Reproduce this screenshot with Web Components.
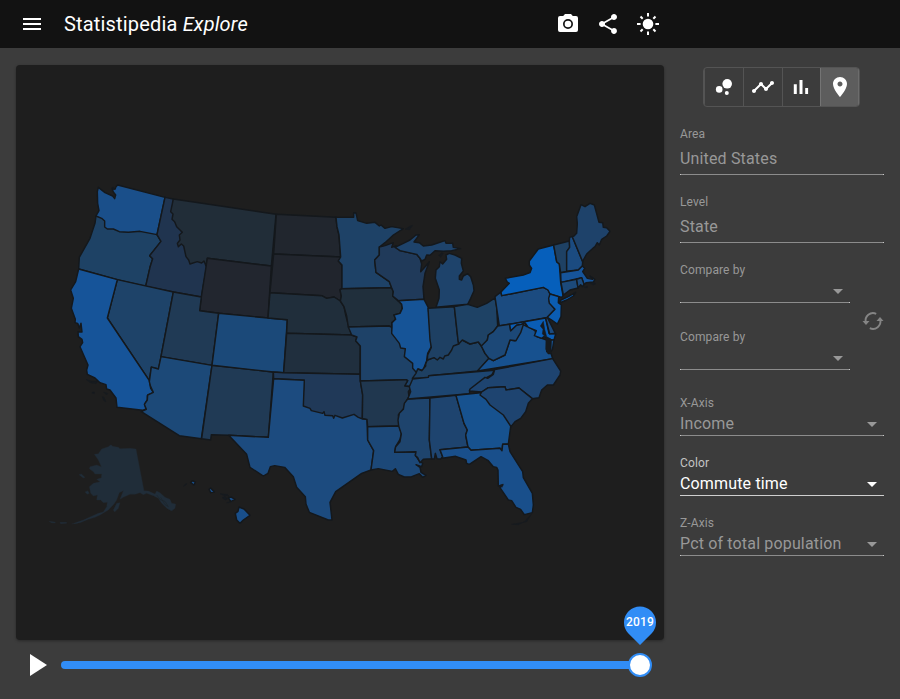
<!DOCTYPE html>
<html lang="en">
<head>
<meta charset="utf-8">
<title>Statistipedia Explore</title>
<style>
html,body{margin:0;height:100%}
body{background:#3c3c3c;color:#fff;font-family:Roboto,"Liberation Sans",sans-serif;overflow:hidden}
</style>
</head>
<body>
<sp-app></sp-app>
<script>
const define=(name,html,init)=>customElements.define(name,class extends HTMLElement{
  connectedCallback(){
    if(this.shadowRoot)return;
    const r=this.attachShadow({mode:'open'});
    const t=document.createElement('template');
    t.innerHTML=typeof html==='function'?html(this):html;
    r.append(t.content.cloneNode(true));
    if(init)init(this,r);
  }
});

const icons={
  menu:'<path d="M3 18h18v-2H3v2zm0-5h18v-2H3v2zm0-7v2h18V6H3z"/>',
  camera:'<path fill-rule="evenodd" d="M9 2 7.200 4H4a2 2 0 0 0-2 2v12a2 2 0 0 0 2 2h16a2 2 0 0 0 2-2V6a2 2 0 0 0-2-2h-3.200L15 2zM12 7a5 5 0 1 1 0 10 5 5 0 0 1 0-10z"/><circle cx="12" cy="12" r="3.300"/>',
  share:'<path d="M18 16.080c-.76 0-1.440.3-1.960.77L8.910 12.700c.05-.23.09-.46.09-.7s-.04-.47-.09-.7l7.050-4.110c.54.5 1.250.81 2.040.81 1.660 0 3-1.340 3-3s-1.340-3-3-3-3 1.340-3 3c0 .24.04.47.09.7L8.040 9.810C7.500 9.310 6.790 9 6 9c-1.660 0-3 1.340-3 3s1.340 3 3 3c.79 0 1.500-.31 2.040-.81l7.120 4.160c-.05.21-.08.43-.08.65 0 1.610 1.310 2.920 2.920 2.920s2.920-1.310 2.920-2.920-1.310-2.920-2.920-2.920z"/>',
  sun:'<circle cx="12" cy="12" r="5.300"/><path fill="none" stroke="currentColor" stroke-width="2" d="M12 1v3.600M12 19.400V23M1 12h3.600M19.400 12H23M4.500 4.500l2.200 2.200M17.300 17.300l2.200 2.200M19.500 4.500l-2.200 2.200M6.700 17.300l-2.200 2.200"/>',
  bubble:'<circle cx="7.200" cy="14.400" r="3.300"/><circle cx="14.800" cy="18" r="2"/><circle cx="15.200" cy="8.800" r="4.800"/>',
  line:'<path d="M23 8c0 1.100-.9 2-2 2-.18 0-.35-.02-.51-.07l-3.560 3.550c.05.16.07.34.07.52 0 1.100-.9 2-2 2s-2-.9-2-2c0-.18.02-.36.07-.52l-2.550-2.550c-.16.05-.34.07-.52.07s-.36-.02-.52-.07l-4.550 4.560c.05.16.07.33.07.51 0 1.100-.9 2-2 2s-2-.9-2-2 .9-2 2-2c.18 0 .35.02.51.07l4.560-4.550C8.020 9.360 8 9.180 8 9c0-1.100.9-2 2-2s2 .9 2 2c0 .18-.02.36-.07.52l2.550 2.550c.16-.05.34-.07.52-.07s.36.02.52.07l3.550-3.560C19.020 8.350 19 8.180 19 8c0-1.100.9-2 2-2s2 .9 2 2z"/>',
  bars:'<path d="M4.800 9.200h3V19h-3zM10.500 5h3v14h-3zM16.200 13h2.900v6h-2.900z"/>',
  pin:'<path d="M12 2C8.130 2 5 5.130 5 9c0 5.250 7 13 7 13s7-7.750 7-13c0-3.870-3.130-7-7-7zm0 9.500c-1.380 0-2.500-1.120-2.500-2.500s1.120-2.500 2.500-2.500 2.500 1.120 2.500 2.500-1.120 2.500-2.500 2.500z"/>',
  swap:'<path fill="none" stroke="currentColor" stroke-width="1.900" d="M15.200 4.800A7.500 7.500 0 0 0 4.800 13.400M8.800 19.200A7.500 7.500 0 0 0 19.200 10.600"/><path d="M1.500 12h7l-3.500 4zM15.500 12h7L19 8z"/>'
};
define('sp-icon',el=>`<style>:host{display:block;width:24px;height:24px;flex:none}svg{display:block}</style>
<svg width="24" height="24" viewBox="0 0 24 24" fill="currentColor">${icons[el.getAttribute('name')]}</svg>`);

define('sp-header',`<style>
:host{display:flex;align-items:center;height:48px;background:#121212;padding:0 20px}
h1{margin:0 0 0 20px;font-size:20px;font-weight:400;line-height:24px;letter-spacing:.17px;width:492px}
nav{display:flex;gap:16px}
</style><sp-icon name="menu"></sp-icon><h1><slot></slot></h1>
<nav><sp-icon name="camera"></sp-icon><sp-icon name="share"></sp-icon><sp-icon name="sun"></sp-icon></nav>`);

define('sp-toggle-group',`<style>
:host{display:flex;box-sizing:border-box;width:157px;height:40px;border:1px solid #545454;border-radius:4px;overflow:hidden}
div{flex:1;display:grid;place-items:center;border-left:1px solid #545454}
div:first-child{border-left:0}
.on{background:#5d5d5d;border-color:#747474;box-shadow:inset -1px 0 #6c6c6c}
</style><div><sp-icon name="bubble"></sp-icon></div><div><sp-icon name="line"></sp-icon></div><div><sp-icon name="bars"></sp-icon></div><div class="on"><sp-icon name="pin"></sp-icon></div>`);

define('sp-field',el=>`<style>
:host{display:flex;flex-direction:column;box-sizing:border-box;height:41px;color:#989898;
 background:linear-gradient(90deg,#c8c8c8 1px,#8c8c8c 1px calc(100% - 1px),#c8c8c8 calc(100% - 1px)) bottom/100% 1px no-repeat}
:host([kind=text]){height:49px}
:host([active]){color:#fff;background:linear-gradient(#cfcfcf,#cfcfcf) bottom/100% 1px no-repeat}
label{font-size:12px;line-height:16px;letter-spacing:.12px;height:16px}
:host([active]) label{color:#c4c4c4}
.v{display:flex;align-items:center;justify-content:space-between;font-size:16px;line-height:24px;height:25px;letter-spacing:.16px;padding-right:7px}
:host([kind=text]) .v{padding-top:4px}
i{width:0;height:0;border:5px solid transparent;border-top-color:currentColor;border-bottom:0;margin-top:2px}
:host([kind=text]) i{display:none}
</style><label>${el.getAttribute('label')}</label><div class="v"><span><slot></slot></span><i></i></div>`);

define('sp-sidebar',`<style>
:host{display:flex;flex-direction:column;width:204px;padding:19px 16px 0}
sp-toggle-group{margin:0 0 19px 23px}
sp-field{margin-bottom:19px}
.pair{display:flex;align-items:center;justify-content:space-between;margin-bottom:25px}
.stack{width:170px;display:flex;flex-direction:column;gap:26px}
.stack sp-field{margin:0}
.pair sp-icon{color:#858585;margin:9px -1px 0 0}
</style>
<sp-toggle-group></sp-toggle-group>
<sp-field kind="text" label="Area">United States</sp-field>
<sp-field kind="text" label="Level">State</sp-field>
<div class="pair"><div class="stack"><sp-field label="Compare by"></sp-field><sp-field label="Compare by"></sp-field></div><sp-icon name="swap"></sp-icon></div>
<sp-field label="X-Axis">Income</sp-field>
<sp-field active label="Color">Commute time</sp-field>
<sp-field label="Z-Axis">Pct of total population</sp-field>`);

/* Outlines are digitised on overlapping survey sheets at three units per pixel;
   a letter selects the sheet whose origin applies to the points that follow. */
const sheets={a:[180,510],b:[780,570],c:[1260,570],d:[1200,870],e:[570,1080],f:[120,1080]};
const states=[
['OR','#1e4265','a 108,138 105,160 90,205 58,262 56,297 172,329 257,349 270,292 278,266 269,257 303,214 291,194 280,170 130,130'],
['WA','#1a4f8a','a 115,52 135,68 158,78 164,86 167,75 160,66 156,55 165,58 168,50 173,45 315,82 291,194 240,184 205,187 178,185 160,177 142,177 134,171 134,153 125,145 108,138 117,122 113,100 112,65'],
['ID','#20344f','a 315,82 340,87 345,155 375,200 400,270 440,275 440,290 424,381 340,366 257,349 270,292 278,266 269,257 303,214 291,194'],
['MT','#212d38','a 340,87 648,133 634,288 442,265 438,288 432,273 425,279 412,275 390,282 386,270 378,260 371,228 364,222 355,230 352,220 360,210 358,195 367,187 350,170 344,155 336,148 339,132 332,125'],
['WY','#22262f','a 442,265 634,288 624,444 476,430 419,422 424,381'],
['NV','#1e4369','a 172,329 340,366 303,560 296,597 274,592 268,632 142,444'],
['CA','#165499','a 56,297 172,329 142,444 268,632 272,655 280,667 262,677 262,690 254,702 258,717 248,721 171,712 168,684 150,660 140,657 138,644 120,638 105,624 82,613 80,600 84,585 60,530 68,518 66,508 55,500 54,485 66,486 63,460 58,474 53,460 45,458 46,448 34,415 40,385 32,360 47,335'],
['UT','#203a55','a 340,366 424,381 419,422 476,430 456,586 303,560'],
['AZ','#1c4978','a 303,560 456,586 f 484,236 418,227 304,155 319,148 313,133 322,120 323,105 340,97 332,80 328,65 334,21 355,27'],
['NM','#203a55','a 456,586 b 40,546 e 235,232 116,226 64,224 62,240 35,236'],
['CO','#1b4979','a 476,430 624,444 b 82,389 71,548 40,546 a 456,586'],
['ND','#21262e','b 49,73 228,82 231,110 237,135 242,201 41,192'],
['SD','#21252d','b 41,192 242,201 235,213 246,225 246,296 240,298 244,318 241,333 222,321 200,325 185,317 30,308'],
['NE','#202e3b','b 30,308 185,317 200,325 222,321 241,333 252,350 257,375 265,405 275,435 80,430 82,389 24,384'],
['KS','#202f3e','b 80,430 275,435 291,441 287,452 301,468 300,553 71,548'],
['OK','#203958','b 40,546 71,548 300,553 301,573 308,615 307,685 e 518,200 330,200 335,150 343,61 251,56'],
['TX','#1c4b7f','e 251,56 343,61 340,138 360,145 364,152 398,160 402,155 405,166 428,167 431,175 435,166 457,174 492,163 505,172 518,177 531,178 533,240 551,272 543,330 515,340 437,395 420,427 426,480 415,480 358,457 348,432 346,410 320,382 310,350 284,322 254,317 241,320 234,340 220,348 180,322 170,283 116,226 235,232'],
['MN','#1e4267','b 228,82 281,82 281,68 288,69 293,92 320,100 345,97 358,108 363,105 375,115 395,110 430,116 400,135 375,158 358,171 358,195 344,210 348,247 388,275 395,293 246,296 246,225 235,213 242,201 237,135 231,110'],
['IA','#202f3c','b 246,296 395,293 400,305 398,318 425,343 427,355 420,370 402,375 407,388 395,398 396,412 387,408 265,411 260,378 252,350 241,333 244,318 240,300'],
['MO','#1e4268','b 265,411 387,408 396,412 395,430 440,470 472,545 468,562 460,572 455,590 434,588 443,572 438,569 301,573 301,468 287,452 291,441 275,435'],
['AR','#20374f','b 301,573 438,569 443,572 434,588 455,590 445,605 447,620 435,640 432,655 415,675 418,708 323,710 321,688 307,685 308,615'],
['LA','#1c4878','e 533,200 628,198 634,220 630,238 617,260 614,277 678,275 676,285 688,303 698,310 695,320 678,314 690,322 693,337 708,346 698,352 688,341 665,350 643,351 625,343 616,326 607,334 565,326 543,330 551,272 533,240'],
['MS','#1e446d','e 653,117 720,114 718,240 725,296 700,298 690,308 683,293 676,287 678,275 614,277 617,260 630,245 634,222 626,198 624,180 628,160 640,148 643,130'],
['AL','#1e446f','e 720,114 798,106 822,190 832,210 827,225 834,261 750,269 758,290 752,297 741,296 736,280 733,297 725,296 718,240'],
['WI','#203a5a','b 358,171 375,167 400,158 395,172 408,168 420,182 470,193 480,205 485,222 482,245 500,225 508,215 495,250 489,290 492,328 415,332 398,318 400,305 395,293 388,275 348,247 344,210 358,195'],
['IL','#165497','b 395,430 396,412 396,398 407,388 402,375 420,370 427,355 425,343 415,332 492,328 505,353 514,470 503,490 500,512 493,530 490,543 475,537 470,548 458,535 458,520 433,500 436,476 422,474 418,460'],
['MI','#1e436b','b 405,172 430,160 450,150 468,135 478,134 462,156 478,158 490,168 c 35,165 75,152 78,160 98,160 100,172 122,176 95,182 70,184 45,182 30,196 20,195 15,208 b 485,213 480,205 470,193 420,182'],
['MI','#1e436b','c 48,352 143,343 152,325 162,302 160,285 152,260 143,251 130,258 125,270 118,268 118,258 130,243 124,220 125,205 105,195 88,190 78,195 80,208 68,222 60,215 58,230 48,240 46,265 58,300 57,325'],
['KY','#1e4062','d 37,265 85,265 88,257 235,243 267,205 255,190 244,168 235,156 210,162 187,150 165,150 120,195 82,210 77,222 77,228 65,242 53,237 48,250'],
['IN','#1e4063','d 84,55 163,50 174,150 176,162 160,168 155,180 145,195 134,198 130,207 120,202 112,210 102,203 82,210 83,195 94,172 90,150'],
['OH','#1e4265','d 163,50 203,43 232,52 260,40 285,24 290,50 293,108 280,125 265,135 262,150 250,168 244,168 235,156 210,162 187,150 176,162 174,150'],
['PA','#1b4b80','c 225,320 243,306 245,317 370,292 384,300 390,312 388,335 405,358 382,382 238,408'],
['NY','#065fbb','c 245,317 243,306 268,280 262,276 256,265 310,255 330,248 335,235 328,225 328,213 355,177 401,165 410,215 418,222 422,277 429,317 425,322 390,312 384,300 370,292'],
['NJ','#0b5db3','c 390,312 416,320 415,338 424,345 423,380 412,402 395,390 382,382 405,358 388,340 386,325'],
['NY','#065fbb','c 418,339 423,330 445,320 467,307 460,318 440,330'],
['VT','#1e4164','c 401,165 448,153 449,172 440,185 440,244 422,248 418,222 410,215'],
['NH','#1b4b80','c 448,153 449,142 457,140 488,215 487,228 475,240 440,244 440,185 449,172'],
['ME','#1e426a','c 457,140 462,138 470,130 472,100 470,80 483,44 495,50 510,40 523,45 537,97 548,98 550,112 560,113 570,124 560,138 545,148 538,165 532,158 525,170 522,172 500,192 490,210 488,215'],
['MA','#16549a','c 422,248 475,240 487,228 494,235 488,245 502,265 518,268 510,258 525,268 520,276 498,278 492,284 485,263 423,277'],
['CT','#1c4a7b','c 423,277 470,268 474,294 450,300 430,315'],
['RI','#1c4a7b','c 470,268 485,263 492,282 488,290 482,284 474,294'],
['VA','#17518f','d 232,243 267,205 280,212 315,195 330,150 345,152 360,120 370,100 405,122 410,140 440,150 444,168 440,185 453,190 458,206'],
['WV','#1c4877','d 293,108 329,103 332,122 350,105 363,103 375,98 381,110 370,104 362,128 348,152 330,150 315,195 280,212 267,205 255,190 244,168 262,150 265,135 280,125'],
['MD','#0a5db5','d 329,103 437,84 447,130 467,132 462,150 455,150 445,146 432,140 425,145 403,137 409,122 385,112 375,98 363,103 350,105 332,122'],
['VA','#17518f','d 453,150 462,150 457,180 452,184'],
['DE','#1b4b80','d 437,84 442,82 466,130 449,132'],
['TN','#1d4672','e 668,57 715,52 716,47 913,31 905,45 885,55 840,92 838,101 653,117 662,95 658,80'],
['NC','#1e4470','d 284,239 458,206 482,243 480,255 460,285 442,285 425,300 417,323 397,326 357,294 318,300 315,290 265,293 245,306 208,303 210,297 255,262 263,265 280,253'],
['GA','#17528f','e 798,106 872,98 900,110 962,170 962,200 955,252 938,253 936,272 930,265 843,271 834,261 827,225 832,210 822,190'],
['SC','#1e4470','d 245,306 265,293 315,290 318,300 357,294 397,326 385,340 377,365 362,385 345,395 333,410 310,375 270,345 258,328 240,315'],
['FL','#194f8b','e 750,269 834,261 843,271 930,265 936,272 938,253 955,252 960,275 998,335 1000,353 1027,400 1030,435 1027,458 1003,464 992,448 978,442 965,422 955,420 930,383 938,375 925,378 924,330 920,322 910,320 895,302 873,290 838,313 830,310 828,300 797,289 757,295 758,290'],
['HI','#194f8b','f 452,368 457,362 466,366 462,375'],
['HI','#194f8b','f 507,388 512,384 523,396 512,398'],
['HI','#194f8b','f 565,412 575,412 585,418 572,425'],
['HI','#194f8b','f 597,441 612,447 630,466 610,480 600,490 590,480 586,460 594,454']
];
const alaska=[
'f 163,283 175,281 185,267 205,260 213,254 218,259 235,262 240,266 270,265 288,267 312,392 325,393 345,402 350,393 360,398 375,412 390,418 395,430 407,432 405,445 395,453 382,446 365,430 355,415 340,407 320,400 310,404 300,398 285,403 270,403 250,412 240,418 250,392 238,398 230,420 222,432 205,450 180,465 165,472 145,478 120,488 95,492 130,480 175,460 190,456 200,440 202,427 190,428 182,420 170,420 172,405 160,408 152,400 148,380 160,370 180,365 170,358 184,353 185,342 165,342 160,335 148,326 150,320 170,315 184,320 175,300',
'f 220,450 230,430 240,428 235,445 224,456','f 117,344 124,342 135,352 130,354','f 135,396 143,392 148,400 142,403','f 27,484 45,486 46,489 34,488','f 60,487 80,487 80,490 62,491'];
const islets=['a 78,628 95,634 114,634 108,641 90,638','a 97,666 103,666 103,671 97,670','a 131,666 143,670 140,675','a 127,680 132,682 138,696 130,690',
'd 430,94 421,108 429,118 427,132 438,142 437,178 444,192 454,192 450,160 453,147 440,140 434,118','f 431,379 436,372 441,371 436,376','f 540,401 562,403 566,408 552,407','f 546,413 555,409 563,417 556,420','f 560,428 570,425 566,429',
'e 965,493 985,494 1003,485 1024,463 1010,485 985,490','c 493,291 502,288 502,293 496,294','c 512,281 520,277 528,281 520,285','a 156,52 162,52 160,60','b 435,118 450,108 458,106 449,119',
'c 56,196 66,188 70,190 62,202','e 930,376 940,372 936,382'];
const outline=s=>{
  let o=[0,0];
  return 'M'+s.split(' ').map(p=>{
    if(sheets[p]){o=sheets[p];return null}
    const[x,y]=p.split(',').map(Number);
    return (o[0]+x)+' '+(o[1]+y);
  }).filter(Boolean).join('L')+'Z';
};
define('sp-map',()=>`<style>
:host{display:block;box-sizing:border-box;height:575px;background:#1e1e1e;border-radius:4px;box-shadow:0 1px 3px #0005}
svg{display:block;width:100%;height:100%}
</style><svg viewBox="48 195 1944 1725" stroke="#14181c" stroke-width="4.300" stroke-linejoin="round">
${states.map(([n,c,p])=>`<path data-state="${n}" fill="${c}" d="${outline(p)}"/>`).join('')}
<g fill="#202d39" stroke="#202b35" stroke-width="1">${alaska.map(p=>`<path d="${outline(p)}"/>`).join('')}</g>
<path fill="none" stroke="#1d242b" stroke-width="2" d="${outline('f 350,405 362,420 375,424 385,440 375,434 362,412').slice(0,-1)}"/>
<g fill="#161a1f" stroke="#161a1f" stroke-width="1.500">${islets.map(p=>`<path d="${outline(p)}"/>`).join('')}</g>
</svg>`);

define('sp-timeline',`<style>
:host{display:flex;align-items:center;height:50px;padding-left:14px}
.play{display:block;width:17px;height:22px}
.track{position:relative;flex:1;height:8px;margin:0 24px 0 14px;background:#318df6;border-radius:4px}
.thumb{position:absolute;right:-12px;top:-8px;box-sizing:border-box;width:24px;height:24px;border:2px solid #318df6;border-radius:50%;background:#fff}
.tip{position:absolute;right:-16px;top:-55px;width:32px;height:39px}
.tip svg{display:block}
.tip span{position:absolute;inset:0 0 auto;text-align:center;font-size:12px;font-weight:500;line-height:32px;letter-spacing:.2px}
</style><svg class="play" viewBox="0 0 17 22"><path fill="#fff" d="M0 0 17 11 0 22z"/></svg>
<div class="track"><div class="tip"><svg width="32" height="39" viewBox="0 0 32 39"><path fill="#318df6" d="M16 39 4.200 27.200A16 16 0 1 1 27.800 27.200z"/></svg><span>2019</span></div><div class="thumb"></div></div>`);

define('sp-app',`<style>
:host{display:block}
main{display:flex}
section{width:648px;padding:17px 0 0 16px}
</style><sp-header>Statistipedia <em>Explore</em></sp-header>
<main><section><sp-map></sp-map><sp-timeline></sp-timeline></section><sp-sidebar></sp-sidebar></main>`);
</script>
</body>
</html>
